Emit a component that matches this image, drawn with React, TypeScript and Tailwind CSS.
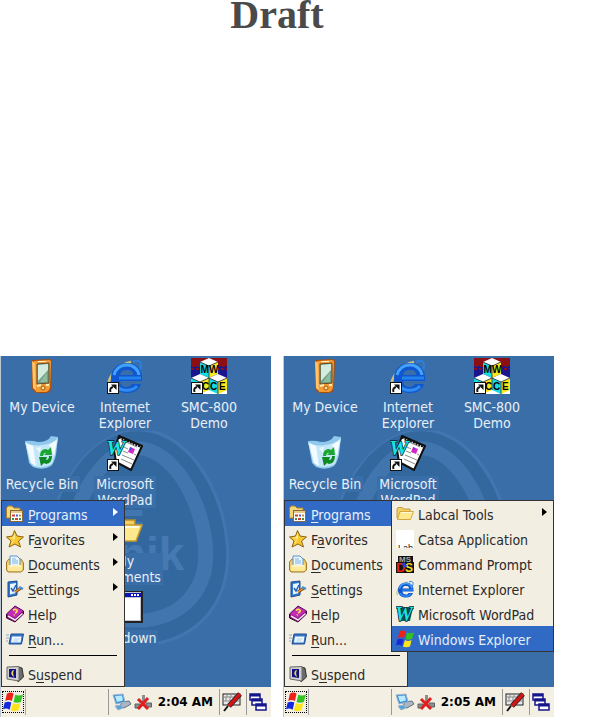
import type { ReactNode } from 'react';

type MenuEntry = {
  label: string;
  hotkey?: number;
  icon: ReactNode;
  submenu?: boolean;
};

/* ---------- desktop icons ---------- */

function ShortcutArrow() {
  return (
    <g>
      <rect x="0.5" y="24.5" width="11" height="11" fill="#fff" stroke="#111" />
      <path d="M3.500 34 C2.500 31 4 29.500 6 29" fill="none" stroke="#111" strokeWidth="2" />
      <path d="M4 26.500 H9.500 V32 Z" fill="#111" />
    </g>
  );
}

function DeviceIcon() {
  return (
    <svg viewBox="0 0 36 36" className="h-9 w-9" aria-hidden="true">
      <path d="M8 2 L25 1 Q28 1 28 4 L27 30 Q27 34 23 35 L12 35 L8 31 Z" fill="#a84f0c" />
      <path d="M10 3 L25 2 Q27 2 27 4 L26 30 Q25 33 22 34 L12 34 Z" fill="#f49a35" />
      <path d="M8 3 L11 5 L12 33 L9 30 Z" fill="#ffc46c" />
      <path d="M13 6 L25 5 V25 L13 26 Z" fill="#6fa08f" stroke="#6b4a20" />
      <path d="M14 7 L24 6 V12 L14 23 Z" fill="#d3ecdf" />
      <path d="M16 24 L23 14 V24 Z" fill="#8dbd9b" />
      <path d="M13 28 L17 27 M22 27 L25 27" stroke="#fff0b0" strokeWidth="2" />
      <circle cx="19" cy="30" r="2" fill="#ffe28a" stroke="#a65514" />
      <path d="M14 3.5 H22" stroke="#fff0c4" />
    </svg>
  );
}

function BinIcon() {
  return (
    <svg viewBox="0 0 36 36" className="h-9 w-9" aria-hidden="true">
      <path d="M1 6 Q7 5 14 7 Q24 7 27 1 L34 2 L32 20 Q30 28 27 31 Q19 36 9 32 L5 28 Z" fill="#8ec8ec" />
      <path d="M1 7 Q9 12 18 10 Q28 9 34 3 L31 19 L28 29 Q19 34 10 31 L6 27 Z" fill="#c4e6f9" />
      <path d="M2 8 L7 28 L12 31 L9 11 Z" fill="#f4fbff" />
      <path d="M25 10 L33 5 L30 21 Z" fill="#f5fcff" />
      <path d="M12 13 L17 12 L16 18 Z" fill="#eaf7ff" />
      <path d="M16 21 Q16 14 22 14 L24 15 L27 12 L28 20 L20 20 L22 18 Q20 17 19 21 Z" fill="#1ba62f" />
      <path d="M28 21 Q28 28 22 29 L20 28 L17 31 L15 22 L23 22 L22 25 Q25 25 25 21 Z" fill="#0d8a24" />
    </svg>
  );
}

function ExplorerMark({ className }: { className: string }) {
  return (
    <svg viewBox="0 0 36 36" className={className} aria-hidden="true">
      <path d="M26 4 C32 1 36 4 33 12" fill="none" stroke="#2d7fe0" strokeWidth="2" />
      <path d="M3 30 C-2 22 10 7 24 4" fill="none" stroke="#cfc07c" strokeWidth="2.500" />
      <path
        d="M35 22 C36 11 29 5 20 5 C11 5 4 11 4 20 C4 30 11 35 20 35 C27 35 32 32 34 26 H25 C24 28 22 29 20 29 C16 29 13 27 13 23 H35 Z M13 17 C14 13 16 12 20 12 C24 12 26 13 26 17 Z"
        fill="#0f56cf"
        fillRule="evenodd"
      />
      <path d="M7 17 C9 10 14 7 20 7 C26 7 31 11 32 17" fill="none" stroke="#43a2fb" strokeWidth="3" />
      <path d="M12 20 H34" stroke="#2383ee" strokeWidth="3" />
      <path d="M8 26 C12 34 25 34 30 28" fill="none" stroke="#2f8df0" strokeWidth="3" />
    </svg>
  );
}

function ExplorerIcon() {
  return (
    <span className="relative block h-9 w-9">
      <ExplorerMark className="h-9 w-9" />
      <svg viewBox="0 0 36 36" className="absolute inset-0 h-9 w-9" aria-hidden="true">
        <ShortcutArrow />
      </svg>
    </span>
  );
}

function DemoIcon() {
  return (
    <svg viewBox="0 0 36 36" className="h-9 w-9" aria-hidden="true">
      <rect width="36" height="36" fill="#1b1590" />
      <rect width="36" height="8" fill="#8c0f14" />
      <path d="M0 5 H36 M1 8 H36 M0 11 H36" stroke="#8c0f14" strokeWidth="2" strokeDasharray="3 2" />
      <rect y="25" width="36" height="11" fill="#fff" />
      <path d="M9 4 L18 0 L27 4 L18 8 Z" fill="#fff" />
      <path d="M9 4 L18 8 V20 L9 16 Z" fill="#16dbe2" />
      <path d="M27 4 L18 8 V20 L27 16 Z" fill="#f6e81c" />
      <path d="M0 20 L9 16 L18 20 L9 24 Z M18 20 L27 16 L36 20 L27 24 Z" fill="#fff" />
      <path d="M0 20 L9 24 V36 L0 32 Z M18 20 L27 24 V36 L18 32 Z" fill="#16dbe2" />
      <path d="M18 20 L9 24 V36 L18 32 Z M36 20 L27 24 V36 L36 32 Z" fill="#f6e81c" />
      <path d="M9 4 L18 8 L27 4 M18 8 V20 M0 20 L9 24 L18 20 L27 24 L36 20 M9 24 V36 M27 24 V36 M18 20 V32" fill="none" stroke="#333" strokeWidth="0.8" />
      <g fontFamily="Liberation Sans" fontWeight="bold" fontSize="10" fill="#000">
        <text x="9.5" y="15">M</text>
        <text x="18" y="15">W</text>
        <text x="11" y="32">C</text>
        <text x="19" y="32">C</text>
        <text x="28" y="32">E</text>
      </g>
      <ShortcutArrow />
    </svg>
  );
}

function WordPadIcon() {
  return (
    <svg viewBox="0 0 36 36" className="h-9 w-9" aria-hidden="true">
      <path d="M12 1 L35 11 L24 35 L9 27 L7 15 Z" fill="#fff" stroke="#111" strokeWidth="2" />
      <path d="M12 2 L35 12" stroke="#111" strokeWidth="3" strokeDasharray="2 1" />
      <path d="M19 7 L30 12 M17 12 L21 14 M16 16 L21 18 M15 20 L27 25 M14 24 L25 29 M27 19 L29 20" stroke="#8b8b8b" />
      <path d="M23 12 L28 14 L26 19 L21 17 Z" fill="#d627c9" />
      <path d="M23 12 L25 13 L23 16 Z" fill="#2b56e0" />
      <text x="-1" y="20" fontFamily="Liberation Serif" fontStyle="italic" fontWeight="bold" fontSize="22" fill="#18e3e3" stroke="#05242b" strokeWidth="1.4" paintOrder="stroke">
        W
      </text>
      <ShortcutArrow />
    </svg>
  );
}

function FolderIcon({ className }: { className: string }) {
  return (
    <svg viewBox="0 0 18 18" className={className} aria-hidden="true">
      <path d="M1 4 L2 2.500 H6 L8 4 H14 V14 H2 L1 13 Z" fill="#f3cf63" stroke="#b68a24" strokeWidth="0.8" />
      <path d="M4 6.500 H17.500 L14.500 14.500 H1.500 Z" fill="#ffe98c" stroke="#c99a2d" strokeWidth="0.8" />
      <path d="M5 7.500 H16" stroke="#fffbe0" />
    </svg>
  );
}

function WindowIcon() {
  return (
    <svg viewBox="0 0 36 36" className="h-9 w-9" aria-hidden="true">
      <rect x="1" y="2" width="35" height="32" fill="#222" />
      <rect x="2" y="3" width="32" height="29" fill="#c4c4cc" />
      <rect x="3" y="4" width="31" height="4" fill="#0b12b8" />
      <path d="M24 6 H33" stroke="#fff" strokeWidth="2" strokeDasharray="2 1" />
      <rect x="3" y="9" width="30" height="22" fill="#fff" />
    </svg>
  );
}

/* ---------- menu icons ---------- */

const menuIcon = 'h-[18px] w-[18px] shrink-0';

function ProgramsIcon() {
  return (
    <svg viewBox="0 0 18 18" className={menuIcon} aria-hidden="true">
      <path d="M0.500 3 L2 1 H6 L8 3 H14 V13 H0.500 Z" fill="#f4d777" stroke="#a8812c" />
      <rect x="4.5" y="5.5" width="12" height="11" fill="#fff" stroke="#8a6a3a" />
      <rect x="5" y="6" width="11" height="2" fill="#e9c984" />
      <path d="M6 10.5 H9" stroke="#cc3c30" strokeWidth="2" />
      <path d="M10 10.5 H12" stroke="#3f62c8" strokeWidth="2" />
      <path d="M13 10.5 H15" stroke="#d9872b" strokeWidth="2" />
      <path d="M6 14 H8" stroke="#3f8d46" strokeWidth="2" />
      <path d="M9 14 H12" stroke="#cc3c30" strokeWidth="2" />
      <path d="M13 14 H15" stroke="#3f8d46" strokeWidth="2" />
    </svg>
  );
}

function StarIcon() {
  return (
    <svg viewBox="0 0 18 18" className={menuIcon} aria-hidden="true">
      <path d="M8.500 0.500 L11 6 L17.500 7 L12.500 11 L14.500 17 L9 14 L3 17 L5 11 L0.500 7 L6.500 6 Z" fill="#f8c92f" stroke="#8d6213" />
      <path d="M8.500 3 L9 9 L3 8 L7 7.500 Z M9 9 L5 15 L6.500 11 Z" fill="#fff0a0" />
    </svg>
  );
}

function DocumentsIcon() {
  return (
    <svg viewBox="0 0 18 18" className={menuIcon} aria-hidden="true">
      <path d="M0.500 7 L3 4 H15 L17.500 8 V15 L15 17 H2 L0.500 15 Z" fill="#f2cf66" stroke="#9f7a2c" />
      <path d="M4 1 H11 L14 4 V11 H4 Z" fill="#e8f5ff" stroke="#5c93c9" />
      <path d="M6 4 H10 M6 6 H12 M6 8 H12" stroke="#7fb3df" />
      <path d="M2 10 H16 V14 L15 16 H3 L2 15 Z" fill="#ffe89a" />
      <path d="M3 11 H15" stroke="#fffbe0" />
    </svg>
  );
}

function SettingsIcon() {
  return (
    <svg viewBox="0 0 18 18" className={menuIcon} aria-hidden="true">
      <path d="M2 2 L11 1 V15 L2 17 Z" fill="#2e78cf" stroke="#1d4c8c" />
      <path d="M4 4 L10 3 V13 L4 14.500 Z" fill="#eaf5ff" />
      <path d="M5 8 L7 11 L10 5" fill="none" stroke="#1c62bd" strokeWidth="1.5" />
      <path d="M9 12 L15 8" stroke="#7a4a1c" strokeWidth="3" />
      <path d="M9 12 L14 8.500" stroke="#eb9a3b" strokeWidth="1.500" />
      <path d="M13 7 L17 9" stroke="#4d90d4" strokeWidth="2.500" />
    </svg>
  );
}

function HelpIcon() {
  return (
    <svg viewBox="0 0 18 18" className={menuIcon} aria-hidden="true">
      <path d="M0.500 9 L9 1 L17.500 6 V9 L9 17 L0.500 13 Z" fill="#7a0f70" stroke="#43063f" />
      <path d="M1 9 L9 1.500 L17 6 L9 13 Z" fill="#c42cb8" />
      <path d="M2 11 L9 15 L16.500 8.500" fill="none" stroke="#f3e6f2" strokeWidth="1.500" />
      <path d="M7 5.500 Q9 3.500 11 5 Q12 6.500 9 8 M8.500 9.500 L8 10.200" fill="none" stroke="#ffe14d" strokeWidth="1.500" />
    </svg>
  );
}

function RunIcon() {
  return (
    <svg viewBox="0 0 18 18" className={menuIcon} aria-hidden="true">
      <path d="M5 4 H17.500 L15.500 14 H3 Z" fill="#3978c9" stroke="#1e4d91" />
      <path d="M6 6.500 H15.500 L14.500 12.500 H5 Z" fill="#f3faff" />
      <path d="M8 8 H14 L12 12 H7 Z" fill="#cfe6f8" />
      <path d="M0 5 H3 M0 8 H3 M0 11 H2" stroke="#8ca7c4" />
    </svg>
  );
}

function SuspendIcon() {
  return (
    <svg viewBox="0 0 18 18" className={menuIcon} aria-hidden="true">
      <path d="M12 2 L16 3 L17.500 12 L12 17 Z" fill="#6d6d6d" stroke="#2e2e2e" />
      <path d="M1 2 L13 1.500 V16 L1 14 Z" fill="#cfcfcf" stroke="#6a6a6a" />
      <path d="M3 4 L10 4 V13 L3 12 Z" fill="#101080" />
      <path d="M7.500 5 Q3.500 8 7.500 11.500 Q6 8 7.500 5 Z" fill="#ffe14d" stroke="#ffe14d" strokeWidth="0.500" />
    </svg>
  );
}

function CatsaIcon() {
  return (
    <svg viewBox="0 0 18 18" className={menuIcon} aria-hidden="true">
      <rect width="18" height="18" fill="#fff" />
      <text x="2" y="21" fontFamily="Liberation Sans" fontSize="9" fill="#222">
        Lab
      </text>
    </svg>
  );
}

function PromptIcon() {
  return (
    <svg viewBox="0 0 18 18" className={menuIcon} aria-hidden="true">
      <path d="M2 1 H17 V7 H18 V18 H0 V7 H2 Z" fill="#111" />
      <g fontFamily="Liberation Sans" fontWeight="bold">
        <text x="3" y="7" fontSize="8" fill="#a9a9a9">MS</text>
        <text x="0" y="17" fontSize="13" fill="#e3221c">D</text>
        <text x="9" y="17" fontSize="12" fill="#f3dd22">S</text>
      </g>
      <path d="M7 8 L10 12" stroke="#2540d8" strokeWidth="3" />
    </svg>
  );
}

function WordPadSmall() {
  return (
    <svg viewBox="0 0 18 18" className={menuIcon} aria-hidden="true">
      <path d="M1 2 H17 L14 16 H3 Z" fill="#0b5960" />
      <text x="-1" y="16" fontFamily="Liberation Serif" fontStyle="italic" fontWeight="bold" fontSize="20" fill="#19e2e2" stroke="#05242b" strokeWidth="1.600" paintOrder="stroke">
        W
      </text>
    </svg>
  );
}

function WindowsFlag({ className }: { className: string }) {
  return (
    <svg viewBox="0 0 18 18" className={className} aria-hidden="true">
      <path d="M3.500 1.500 Q7 -0.500 9.500 1.500 L8 8 Q5 6.500 2 8 Z" fill="#ee2118" />
      <path d="M11 2.500 Q14 4 18 2.500 L16 9 Q12 10.500 9.500 9 Z" fill="#33c322" />
      <path d="M1.500 9.500 Q5 8 7.500 9.500 L6 16 Q3 14 0 15.500 Z" fill="#1428dd" />
      <path d="M9 10 Q12 12 15.500 10 L14 16.500 Q10 18 7 16.500 Z" fill="#fde41a" />
    </svg>
  );
}

/* ---------- tray icons ---------- */

function NetworkIcon() {
  return (
    <svg viewBox="0 0 20 18" className="h-[18px] w-5 shrink-0" aria-hidden="true">
      <path d="M10 9 L17 8 L19 11 L12 15 L8 13 Z" fill="#aab6c2" stroke="#65717e" />
      <path d="M1 2 L11 1 L13 9 L4 11 Z" fill="#3d8ed8" stroke="#9fb3c6" />
      <path d="M3 3 L10 2.500 L11 7.500 L5 9 Z" fill="#b5ecff" />
      <path d="M3 13 L9 12 L11 15 L6 17 Z" fill="#55a4e0" stroke="#9fb3c6" />
    </svg>
  );
}

function DisconnectedIcon() {
  return (
    <svg viewBox="0 0 18 18" className="h-[18px] w-[18px] shrink-0" aria-hidden="true">
      <path d="M8 2 H11 V9 L12 10 H7 L8 9 Z" fill="#8b8f8f" />
      <path d="M1 11 H6 V15 H1 Z M12 10 H17.500 V14 H12 Z" fill="#8b8f8f" stroke="#5c6262" />
      <path d="M4 6 L14 16 M14 5 L4 16" stroke="#e02020" strokeWidth="3" />
    </svg>
  );
}

function PenIcon() {
  return (
    <svg viewBox="0 0 20 20" className="h-5 w-5" aria-hidden="true">
      <rect x="1" y="2" width="17" height="11" fill="#e9e9e9" stroke="#222" />
      <path d="M1 5 H18 M1 9 H18 M5 2 V5 M9 2 V5 M13 2 V5 M4 5 V9 M8 5 V9" stroke="#888" />
      <path d="M18 2 L7 14" stroke="#222" strokeWidth="5" />
      <path d="M18 2 L7 14" stroke="#d31518" strokeWidth="3.500" />
      <path d="M6 14 L2 19" stroke="#111" strokeWidth="2" />
    </svg>
  );
}

function CascadeIcon() {
  return (
    <svg viewBox="0 0 18 18" className="h-[18px] w-[18px]" aria-hidden="true">
      {[
        [1, 1],
        [3, 6],
        [7, 11],
      ].map(([x, y]) => (
        <g key={y}>
          <rect x={x} y={y} width="10" height="6" fill="#fff" stroke="#15158c" strokeWidth="1.500" />
          <rect x={x} y={y} width="10" height="2.500" fill="#15158c" />
        </g>
      ))}
    </svg>
  );
}

/* ---------- shell ---------- */

const desktopItems = [
  { label: ['My Device'], icon: <DeviceIcon />, cell: 'col-start-1 row-start-1' },
  { label: ['Recycle Bin'], icon: <BinIcon />, cell: 'col-start-1 row-start-2' },
  { label: ['Internet', 'Explorer'], icon: <ExplorerIcon />, cell: 'col-start-2 row-start-1' },
  { label: ['Microsoft', 'WordPad'], icon: <WordPadIcon />, cell: 'col-start-2 row-start-2' },
  { label: ['My', 'Documents'], icon: <FolderIcon className="h-9 w-9" />, cell: 'col-start-2 row-start-3' },
  { label: ['Shutdown'], icon: <WindowIcon />, cell: 'col-start-2 row-start-4' },
  { label: ['SMC-800', 'Demo'], icon: <DemoIcon />, cell: 'col-start-3 row-start-1' },
];

const startEntries: MenuEntry[] = [
  { label: 'Programs', hotkey: 0, icon: <ProgramsIcon />, submenu: true },
  { label: 'Favorites', hotkey: 1, icon: <StarIcon />, submenu: true },
  { label: 'Documents', hotkey: 0, icon: <DocumentsIcon />, submenu: true },
  { label: 'Settings', hotkey: 0, icon: <SettingsIcon />, submenu: true },
  { label: 'Help', hotkey: 0, icon: <HelpIcon /> },
  { label: 'Run...', hotkey: 0, icon: <RunIcon /> },
];

const programEntries: MenuEntry[] = [
  { label: 'Labcal Tools', icon: <FolderIcon className={menuIcon} />, submenu: true },
  { label: 'Catsa Application', icon: <CatsaIcon /> },
  { label: 'Command Prompt', icon: <PromptIcon /> },
  { label: 'Internet Explorer', icon: <ExplorerMark className={menuIcon} /> },
  { label: 'Microsoft WordPad', icon: <WordPadSmall /> },
  { label: 'Windows Explorer', icon: <WindowsFlag className={menuIcon} /> },
];

function MenuItem({ entry, active = false }: { entry: MenuEntry; active?: boolean }) {
  const { label, hotkey, icon, submenu } = entry;
  return (
    <li>
      <button
        type="button"
        className={`flex h-[25px] w-full items-center gap-1 pr-1.5 pl-1 text-left whitespace-nowrap ${
          active ? 'bg-[#316ac5] text-[#e6eefa]' : 'text-[#2a2a2a]'
        }`}
      >
        {icon}
        <span className="grow pt-0.5">
          {hotkey === undefined ? (
            label
          ) : (
            <>
              {label.slice(0, hotkey)}
              <u className="underline-offset-2">{label[hotkey]}</u>
              {label.slice(hotkey + 1)}
            </>
          )}
        </span>
        {submenu && (
          <svg viewBox="0 0 5 8" className="mb-1 h-2 w-[5px] shrink-0" aria-hidden="true">
            <path d="M0 0 L5 4 L0 8 Z" fill={active ? '#fff' : '#000'} />
          </svg>
        )}
      </button>
    </li>
  );
}

function StartMenu() {
  return (
    <ul className="absolute bottom-0 left-0 w-[124px] border border-[#333] bg-[#f2eee1]">
      {startEntries.map((entry, i) => (
        <MenuItem key={entry.label} entry={entry} active={i === 0} />
      ))}
      <li className="mx-[7px] mt-1 mb-[5px] h-px bg-black" role="separator" />
      <MenuItem entry={{ label: 'Suspend', hotkey: 1, icon: <SuspendIcon /> }} />
    </ul>
  );
}

function ProgramsMenu() {
  return (
    <ul className="absolute right-0 bottom-[35px] w-[163px] border border-[#333] bg-[#f2eee1]">
      {programEntries.map((entry, i) => (
        <MenuItem key={entry.label} entry={entry} active={i === programEntries.length - 1} />
      ))}
    </ul>
  );
}

function Wallpaper() {
  return (
    <svg viewBox="0 0 271 331" className="absolute inset-0 h-full w-full" aria-hidden="true">
      <path d="M140 72 C192 74 229 140 229 200 C229 256 190 291 137 291 C84 291 45 256 45 200 C45 140 84 74 140 72 Z" fill="#4176b0" />
      <path d="M137 75 C188 75 226 140 226 200 C226 252 190 288 137 288 C84 288 48 252 48 200 C48 140 86 75 137 75 Z" fill="#33689f" />
      <path d="M137 85 C178 85 213 146 213 200 C213 243 180 272 137 272 C94 272 61 243 61 200 C61 146 96 85 137 85 Z" fill="#4075ae" />
      <path d="M137 99 C168 99 198 152 198 199 C198 234 172 258 137 258 C102 258 76 234 76 199 C76 152 106 99 137 99 Z" fill="#33689f" />
      <path d="M118 157 H142 M118 169 H142" stroke="#4176b0" strokeWidth="6" />
      <text x="184" y="214" textAnchor="end" fontFamily="Liberation Sans" fontWeight="bold" fontSize="46" fill="#4579b2">
        nik
      </text>
    </svg>
  );
}

function Taskbar({ time }: { time: string }) {
  return (
    <div className="flex h-[30px] items-center bg-[#f3efe3]">
      <button type="button" aria-label="Start" className="ml-px flex h-[22px] w-[22px] items-center justify-center border border-dotted border-black">
        <WindowsFlag className="h-5 w-5" />
      </button>
      <div className="ml-px h-[26px] w-px bg-[#aaa]" />
      <div className="ml-auto flex h-[26px] items-center gap-0.5 border-l border-[#999] pr-1.5 pl-[3px]">
        <NetworkIcon />
        <DisconnectedIcon />
        <time className="pl-1 font-['DejaVu_Sans'] text-[12px] font-bold whitespace-nowrap text-black">{time}</time>
      </div>
      <button type="button" aria-label="Input panel" className="flex h-[26px] w-[27px] items-center border-l border-[#999] pl-0.5">
        <PenIcon />
      </button>
      <button type="button" aria-label="Switch windows" className="flex h-[26px] w-[25px] items-center border-l border-[#999] pl-0.5">
        <CascadeIcon />
      </button>
    </div>
  );
}

function Screen({ time, programsOpen = false }: { time: string; programsOpen?: boolean }) {
  return (
    <section className="min-w-0 border-l border-[#bcc8d4] font-['DejaVu_Sans_Condensed','Noto_Sans',sans-serif] text-[14px] leading-4">
      <div className="relative h-[331px] overflow-hidden bg-[#3a6ea9]">
        <Wallpaper />
        <ul className="relative grid auto-rows-[77px] grid-cols-[82px_84px_84px] pt-0.5">
          {desktopItems.map(({ label, icon, cell }) => (
            <li key={label.join(' ')} className={`flex flex-col items-center gap-[5px] ${cell}`}>
              {icon}
              <span className="bg-[#3a6ea9] px-0.5 text-center whitespace-nowrap text-[#e8eff7]">
                {label.map((line) => (
                  <span key={line} className="block">
                    {line}
                  </span>
                ))}
              </span>
            </li>
          ))}
        </ul>
        <StartMenu />
        {programsOpen && <ProgramsMenu />}
      </div>
      <Taskbar time={time} />
    </section>
  );
}

export default function App() {
  return (
    <main className="min-h-screen bg-white pr-11">
      <h1 className="mb-[326px] text-center font-['Liberation_Serif',serif] text-[40px] leading-[30px] font-bold text-[#4a4a4a]">
        Draft
      </h1>
      <div className="grid grid-cols-2 gap-3">
        <Screen time="2:04 AM" />
        <Screen time="2:05 AM" programsOpen />
      </div>
    </main>
  );
}
